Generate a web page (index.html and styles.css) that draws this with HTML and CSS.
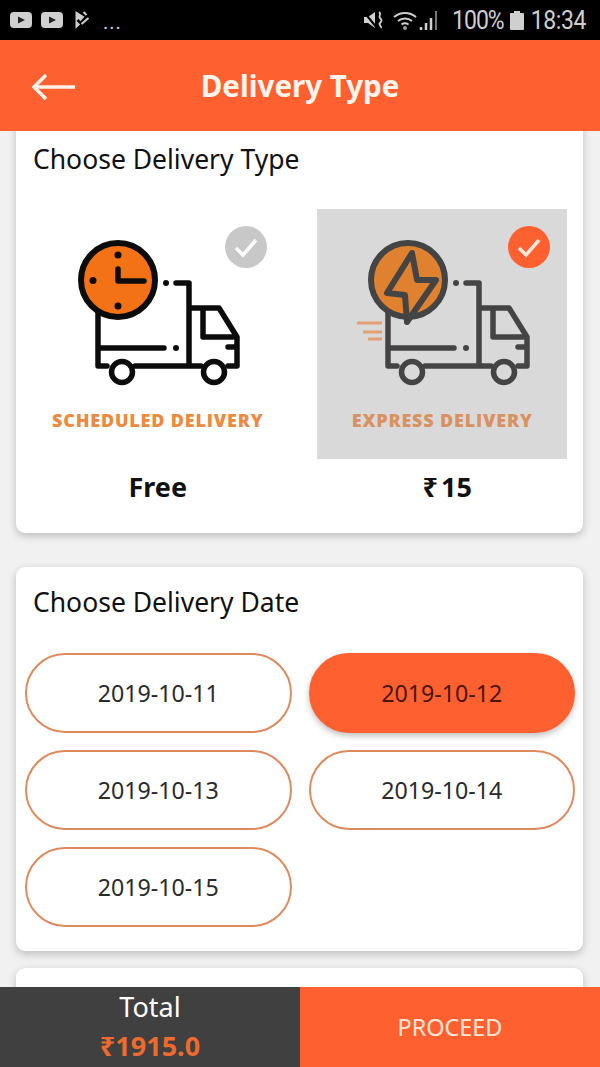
FILE: index.html
```html
<!DOCTYPE html>
<html lang="en">
<head>
<meta charset="utf-8">
<title>Delivery Type</title>
<link rel="stylesheet" href="styles.css">
</head>
<body>
<div class="app">
  <div class="status">
    <div class="status-left">
      <svg class="yt" viewBox="0 0 22 16"><rect width="22" height="16" rx="4" fill="#cfcfcf"/><path d="M8 4.5 15 8 8 11.500Z" fill="#222"/></svg>
      <svg class="yt" viewBox="0 0 22 16"><rect width="22" height="16" rx="4" fill="#cfcfcf"/><path d="M8 4.500 15 8 8 11.500Z" fill="#222"/></svg>
      <svg class="flag" viewBox="0 0 16 20"><path d="M1 1 12 8 1 19Z" fill="#cfcfcf"/><path d="M3 10 6 13 14 4" fill="none" stroke="#000" stroke-width="2.500"/><path d="M9 2 12 5M7 14 14 8" stroke="#cfcfcf" stroke-width="2" fill="none"/></svg>
      <span class="dots">...</span>
    </div>
    <div class="status-right">
      <svg class="mute" viewBox="0 0 22 20"><path d="M1 7h4l7-5v16l-7-5H1Z" fill="#cfcfcf"/><path d="M1 2 14 18" stroke="#000" stroke-width="2"/><path d="M16 2c3 2-1 4 1 6s2 3 0 5 2 3 1 5" fill="none" stroke="#cfcfcf" stroke-width="1.800"/></svg>
      <svg class="wifi" viewBox="0 0 50 22"><path d="M1 8a17 17 0 0 1 22 0M5 12a11 11 0 0 1 14 0M8.500 15.500a6 6 0 0 1 7 0" fill="none" stroke="#cfcfcf" stroke-width="2"/><circle cx="12" cy="19" r="2" fill="#999"/><path d="M28 21v-3M33 21v-7M38 21V9" stroke="#cfcfcf" stroke-width="2.500"/><path d="M43 21V2" stroke="#777" stroke-width="2"/></svg>
      <span class="pct">100%</span>
      <svg class="batt" viewBox="0 0 14 19"><path d="M4 0h6v2h3a1 1 0 0 1 1 1v15a1 1 0 0 1-1 1H1a1 1 0 0 1-1-1V3a1 1 0 0 1 1-1h3Z" fill="#cfcfcf"/></svg>
      <span class="time">18:34</span>
    </div>
  </div>

  <header class="topbar">
    <svg class="back" viewBox="0 0 44 28"><path d="M43 14H3M14 2 2 14l12 12" fill="none" stroke="#fff1e8" stroke-width="3.500"/></svg>
    <h1 class="title">Delivery Type</h1>
  </header>

  <main class="content">
    <section class="card card-type">
      <h2 class="card-title">Choose Delivery Type</h2>
      <div class="types">
        <div class="type">
          <div class="tile">
            <svg class="truck truck-left" viewBox="0 0 250 190">
              <g class="ink">
                <path d="M71 100V157H80M108 157H174M201 157H210V128L192 99H162M149 74H162V157M176 101V128H206M201 138H209M73 139H137"/>
                <circle cx="95" cy="163" r="10.500"/><circle cx="187" cy="163" r="10.500"/>
              </g>
              <circle class="dot" cx="139" cy="74" r="3"/><circle class="dot" cx="149" cy="139" r="3"/>
              <circle class="disc" cx="91" cy="71" r="37"/>
              <path class="ink" d="M91 60V72H117"/>
              <circle class="dot" cx="91" cy="46" r="3.500"/><circle class="dot" cx="91" cy="97" r="3.500"/><circle class="dot" cx="66" cy="71.500" r="3.500"/>
            </svg>
            <div class="tile-label">SCHEDULED DELIVERY</div>
            <span class="badge badge-off">
              <svg viewBox="0 0 42 42"><path d="M11 22 18 29 31 14" fill="none" stroke="#fff" stroke-width="3.500"/></svg>
            </span>
          </div>
          <div class="price">Free</div>
        </div>
        <div class="type">
          <div class="tile tile-on">
            <svg class="truck" viewBox="0 0 250 190">
              <path class="speed" d="M40 114H65M46 123H65M51 130H65"/>
              <g class="ink">
                <path d="M71 100V157H80M108 157H174M201 157H210V128L192 99H162M149 74H162V157M176 101V128H206M201 138H209M73 139H137"/>
                <circle cx="95" cy="163" r="10.500"/><circle cx="187" cy="163" r="10.500"/>
              </g>
              <circle class="dot" cx="139" cy="74" r="3"/><circle class="dot" cx="149" cy="139" r="3"/>
              <circle class="disc" cx="91" cy="71" r="37"/>
              <path class="bolt" d="M95 44 70 84 88 86 90 113 119 71 100 71Z"/>
            </svg>
            <div class="tile-label">EXPRESS DELIVERY</div>
            <span class="badge badge-on">
              <svg viewBox="0 0 42 42"><path d="M11 22 18 29 31 14" fill="none" stroke="#ffe6d8" stroke-width="3.500"/></svg>
            </span>
          </div>
          <div class="price price-money"><span class="rupee">₹</span>15</div>
        </div>
      </div>
    </section>

    <section class="card card-date">
      <h2 class="card-title">Choose Delivery Date</h2>
      <div class="dates">
        <div class="date">2019-10-11</div>
        <div class="date date-on">2019-10-12</div>
        <div class="date">2019-10-13</div>
        <div class="date">2019-10-14</div>
        <div class="date">2019-10-15</div>
      </div>
    </section>

    <section class="card card-next"></section>
  </main>

  <footer class="bottom">
    <div class="total">
      <div class="total-label">Total</div>
      <div class="total-value">₹1915.0</div>
    </div>
    <div class="proceed">PROCEED</div>
  </footer>
</div>
</body>
</html>
```

FILE: styles.css
```css
* { box-sizing: border-box; }
html, body { margin: 0; padding: 0; }
body { font-family: "Noto Sans", "Open Sans", sans-serif; background: #f1f1f1; }
.app { width: 600px; height: 1067px; display: flex; flex-direction: column; overflow: hidden; }

.status { height: 40px; flex: none; background: #000; display: flex; justify-content: space-between; align-items: center; padding: 0 14px 0 10px; color: #cfcfcf; font-family: Roboto, sans-serif; }
.status-left, .status-right { display: flex; align-items: center; }
.yt { width: 22px; height: 16px; margin-right: 9px; }
.flag { width: 17px; height: 20px; margin-left: 2px; }
.dots { font-size: 20px; margin-left: 12px; letter-spacing: 1px; padding-top: 4px; }
.mute { width: 22px; height: 20px; margin-right: 8px; }
.wifi { width: 50px; height: 22px; margin-right: 9px; }
.pct { font-size: 23px; letter-spacing: -1px; display: inline-block; transform: scaleY(1.12); }
.time { font-size: 23px; letter-spacing: -0.4px; display: inline-block; transform: scaleY(1.12); }
.batt { width: 14px; height: 19px; margin: 0 7px 0 6px; }

.topbar { height: 91px; flex: none; background: #ff6030; display: flex; align-items: center; justify-content: center; position: relative; z-index: 2; }
.back { position: absolute; left: 32px; top: 33px; width: 44px; height: 28px; }
.title { margin: 0; color: #fff5ee; font-size: 29.500px; font-weight: 700; }

.content { flex: 1; min-height: 0; padding: 0 17px 0 16px; margin-top: -12px; }
.card { background: #fff; border-radius: 9px; box-shadow: 0 3px 8px rgba(0,0,0,.22); }
.card-title { margin: 0; font-size: 26.500px; font-weight: 400; color: #111; line-height: 34px; }

.card-type { height: 414px; padding: 23px 0 0; }
.card-type .card-title { padding-left: 17px; }
.types { display: grid; grid-template-columns: 1fr 1fr; margin-top: 33px; }
.type { display: flex; flex-direction: column; align-items: center; }
.tile { position: relative; width: 250px; height: 250px; display: flex; flex-direction: column; align-items: center; }
.tile-on { background: #d9d9d9; left: 1px; }
.truck { width: 250px; height: 190px; flex: none; }
.truck-left { position: relative; left: -6px; }
.tile-label { margin-top: 10px; font-family: "Open Sans", sans-serif; font-weight: 800; font-size: 18px; letter-spacing: 0.8px; line-height: 22px; color: #ec8a40; white-space: nowrap; }
.tile-on .tile-label { color: #d8915f; }
.price { margin-top: 10px; font-size: 27px; font-weight: 700; color: #111; line-height: 36px; }
.price-money { padding-left: 12px; }
.rupee { margin-right: 3px; }

.ink { fill: none; stroke: #0c0c0c; stroke-width: 5.500; stroke-linecap: round; stroke-linejoin: round; }
.dot { fill: #0c0c0c; }
.disc { fill: #f47216; stroke: #0c0c0c; stroke-width: 6; }
.tile-on .ink { stroke: #444; }
.tile-on .dot { fill: #444; }
.tile-on .disc { fill: #e0812f; stroke: #444; }
.bolt { fill: #e0812f; stroke: #444; stroke-width: 6; stroke-linejoin: round; }
.speed { fill: none; stroke: #e3a075; stroke-width: 3; }

.badge { position: absolute; top: 17px; width: 42px; height: 42px; border-radius: 50%; }
.badge svg { display: block; width: 42px; height: 42px; }
.badge-off { right: 16px; background: #c8c8c8; }
.badge-on { right: 17px; background: #ff6030; }

.card-date { height: 384px; margin-top: 34px; padding: 18px 8px 0 9px; }
.card-date .card-title { padding-left: 8px; }
.dates { display: grid; grid-template-columns: 1fr 1fr; column-gap: 17px; row-gap: 17px; margin-top: 34px; }
.date { height: 80px; border: 2px solid #dd8a5e; border-radius: 40px; display: flex; align-items: center; justify-content: center; font-size: 23.200px; color: #2a2a2a; }
.date-on { background: #ff6030; border-color: #ff6030; color: #4a1408; box-shadow: 0 3px 6px rgba(0,0,0,.25); }

.card-next { height: 100px; margin-top: 17px; }

.bottom { height: 80px; flex: none; display: grid; grid-template-columns: 1fr 1fr; position: relative; z-index: 2; }
.total { background: #404040; display: flex; flex-direction: column; align-items: center; }
.total-label { color: #fff; font-size: 27px; line-height: 36px; margin-top: 2px; }
.total-value { color: #ee6a2e; font-size: 27px; font-weight: 700; line-height: 36px; margin-top: 3px; }
.proceed { background: #ff6030; color: #ffe6d8; font-size: 23.400px; display: flex; align-items: center; justify-content: center; }
```
